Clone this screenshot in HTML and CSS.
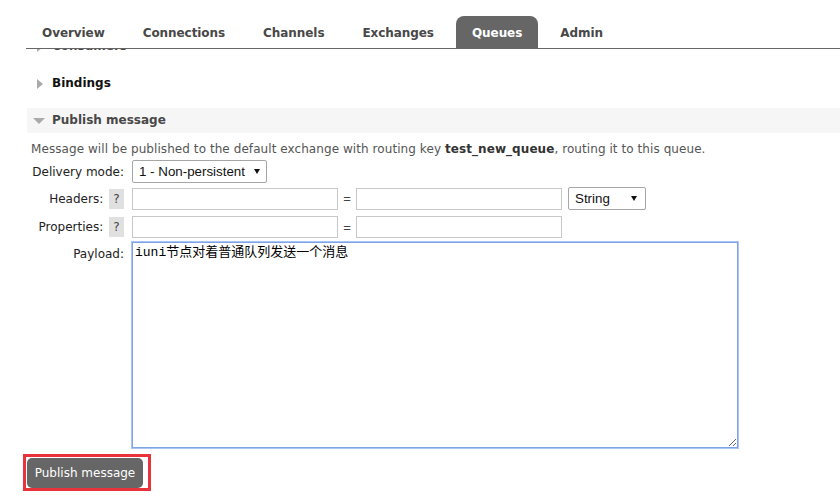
FILE: index.html
```html
<!DOCTYPE html>
<html>
<head>
<meta charset="utf-8">
<link rel="stylesheet" href="styles.css">
</head>
<body>
<header class="topbar">
  <ul class="tabs">
    <li class="tab">Overview</li>
    <li class="tab">Connections</li>
    <li class="tab">Channels</li>
    <li class="tab">Exchanges</li>
    <li class="tab active">Queues</li>
    <li class="tab">Admin</li>
  </ul>
</header>
<main class="main">
  <section class="section">
    <h2 class="sec-title"><span class="tri-right"></span>Consumers</h2>
  </section>
  <section class="section">
    <h2 class="sec-title dark"><span class="tri-right"></span>Bindings</h2>
  </section>
  <section class="section">
    <h2 class="sec-title shaded"><span class="tri-down"></span>Publish message</h2>
    <div class="sec-body">
      <p class="desc">Message will be published to the default exchange with routing key <b>test_new_queue</b>, routing it to this queue.</p>
      <div class="form">
        <div class="row r1">
          <label class="lbl">Delivery mode:</label>
          <span class="select-wrap sel-mode"><select class="select"><option>1 - Non-persistent</option><option>2 - Persistent</option></select></span>
        </div>
        <div class="row r2">
          <label class="lbl">Headers: <span class="help">?</span></label>
          <input class="text" type="text">
          <span class="eq">=</span>
          <input class="text" type="text">
          <span class="select-wrap sel-type"><select class="select"><option>String</option><option>Number</option><option>Boolean</option></select></span>
        </div>
        <div class="row r3">
          <label class="lbl">Properties: <span class="help">?</span></label>
          <input class="text" type="text">
          <span class="eq">=</span>
          <input class="text" type="text">
        </div>
        <div class="row r4">
          <label class="lbl top">Payload:</label>
          <textarea class="payload">iuni节点对着普通队列发送一个消息</textarea>
        </div>
      </div>
    </div>
  </section>
  <div class="btn-area">
    <div class="highlight"><button class="btn" type="button">Publish message</button></div>
  </div>
</main>
</body>
</html>
```
FILE: styles.css
```css
html, body {
  margin: 0;
  padding: 0;
  background: #fff;
}
body {
  font-family: "DejaVu Sans", Verdana, sans-serif;
  font-size: 12px;
  color: #333;
}
.topbar {
  position: fixed;
  top: 0;
  left: 0;
  right: 0;
  height: 49px;
  background: #fff;
  z-index: 5;
}
.tabs {
  list-style: none;
  margin: 0 0 0 26px;
  padding: 16px 0 0 0;
  height: 32px;
  display: flex;
  gap: 6px;
  border-bottom: 1px solid #666;
}
.tab {
  padding: 2px 16px 0 16px;
  height: 30px;
  line-height: 31px;
  font-weight: bold;
  font-size: 12px;
  letter-spacing: -0.07px;
  color: #484848;
  border-radius: 8px 8px 0 0;
}
.tab.active {
  background: #666;
  color: #fff;
}
.main {
  padding-top: 34px;
}
.section {
  margin-left: 27px;
}
.sec-title {
  margin: 0 0 12px 0;
  height: 25px;
  line-height: 25px;
  font-size: 12px;
  font-weight: bold;
  color: #484848;
  display: flex;
  align-items: center;
}
.sec-title.dark { color: #111; }
.sec-title.shaded { background: #f6f6f6; margin-bottom: 0; }
.tri-right {
  width: 0;
  height: 0;
  border-left: 6px solid #aaa;
  border-top: 5px solid transparent;
  border-bottom: 5px solid transparent;
  margin-left: 10px;
  margin-right: 9px;
}
.tri-down {
  width: 0;
  height: 0;
  border-top: 6px solid #aaa;
  border-left: 6px solid transparent;
  border-right: 6px solid transparent;
  margin-left: 6px;
  margin-right: 7px;
  margin-top: 1px;
}
.sec-body {
  padding-left: 4px;
}
.desc {
  margin: 8px 0 0 0;
  line-height: 16px;
  color: #555;
  letter-spacing: 0.07px;
}
.desc b { color: #333; }
.form {
  display: flex;
  flex-direction: column;
}
.row {
  display: flex;
  align-items: center;
}
.r1 { margin-top: 3px; height: 23px; }
.r2 { margin-top: 4px; height: 23px; }
.r3 { margin-top: 6px; height: 22px; }
.r4 { margin-top: 3px; align-items: flex-start; }
.lbl {
  width: 93px;
  margin-right: 8px;
  text-align: right;
  color: #222;
  line-height: 16px;
  white-space: nowrap;
}
.lbl.top { padding-top: 5px; margin-right: 8px; }
.help {
  display: inline-block;
  width: 15px;
  height: 20px;
  line-height: 20px;
  margin-left: 2px;
  text-align: center;
  background: #e0e0e0;
  color: #444;
  vertical-align: middle;
}
.text {
  box-sizing: border-box;
  width: 206px;
  height: 22px;
  border: 1px solid #c8c8c8;
  margin: 0;
  padding: 1px 3px;
  font-family: "Liberation Sans", Arial, sans-serif;
  font-size: 13px;
  background: #fff;
}
.eq {
  width: 18px;
  text-align: center;
  color: #444;
  font-family: "Liberation Sans", Arial, sans-serif;
  font-size: 13px;
}
.select-wrap {
  position: relative;
  display: inline-block;
}
.select-wrap::after {
  content: "";
  position: absolute;
  top: 9px;
  width: 0;
  height: 0;
  border-top: 5px solid #111;
  border-left: 3px solid transparent;
  border-right: 3px solid transparent;
  pointer-events: none;
}
.sel-mode::after { right: 7px; }
.sel-type::after { right: 9px; }
.sel-type { margin-left: 6px; }
.select {
  -webkit-appearance: none;
  appearance: none;
  box-sizing: border-box;
  height: 23px;
  border: 1px solid #a6a6a6;
  border-radius: 2px;
  background: #fff;
  padding: 0 0 0 6px;
  margin: 0;
  font-family: "Liberation Sans", Arial, sans-serif;
  font-size: 13.33px;
  color: #111;
  display: block;
}
.sel-mode .select { width: 135px; }
.sel-type .select { width: 78px; }
.payload {
  box-sizing: border-box;
  width: 606px;
  height: 206px;
  margin: 1px 0 0 0;
  padding: 2px;
  border: 1px solid #7ea3e6;
  box-shadow: 0 0 0 1px #a9c5f5;
  outline: none;
  font-family: "Liberation Mono", "Noto Sans CJK SC", monospace;
  font-size: 13px;
  line-height: 16px;
  color: #000;
  resize: both;
}
.btn-area {
  margin: 6px 0 0 23px;
}
.highlight {
  display: inline-block;
  border: 3px solid #e8333a;
  padding: 1px 5px 0 1px;
}
.btn {
  display: block;
  width: 116px;
  height: 30px;
  border: none;
  border-radius: 5px;
  background: #666;
  color: #fff;
  font-family: "DejaVu Sans", Verdana, sans-serif;
  font-size: 12px;
  padding: 0;
  margin: 0;
}
```
